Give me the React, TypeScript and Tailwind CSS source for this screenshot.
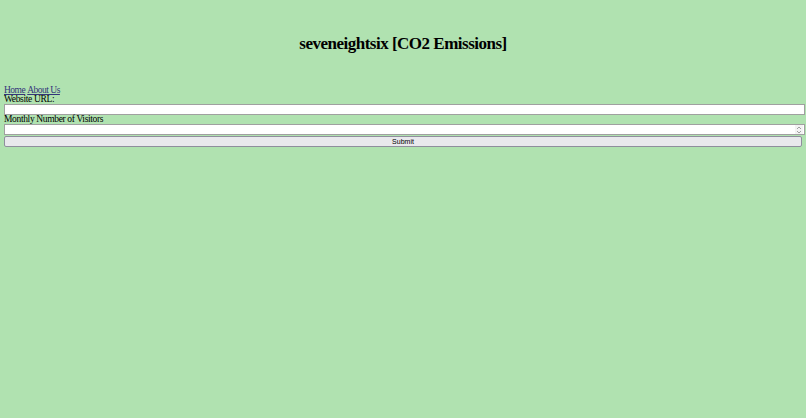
export default function App() {
  return (
    <div className="min-h-[418px] bg-[#b0e2b0] px-[4px] text-black" style={{ fontFamily: '"Liberation Serif", serif' }}>
      <h1 className="pt-[33px] text-center text-[17px] font-bold leading-[22px] tracking-[-0.5px]">
        seveneightsix [CO2 Emissions]
      </h1>
      <nav className="mt-[30px] flex gap-[2px] text-[9.5px] leading-[10px] tracking-[-0.5px]">
        <a href="#" className="text-[#34347a] underline">Home</a>
        <a href="#" className="text-[#34347a] underline">About Us</a>
      </nav>
      <form className="flex flex-col text-[9.5px] tracking-[-0.35px]">
        <label className="leading-[9px]">Website URL:</label>
        <input type="text" className="mr-[-3px] h-[11px] border border-[#a0a0a0] bg-white outline-none" />
        <label className="leading-[9px]">Monthly Number of Visitors</label>
        <div className="relative mr-[-3px] h-[11px] border border-[#a0a0a0] bg-white">
          <input type="text" className="h-full w-full bg-transparent outline-none" />
          <div className="absolute right-[1px] top-0 flex h-full w-[8px] items-center justify-center bg-[#f3f3f3]">
            <svg width="6" height="8" viewBox="0 0 6 8" fill="none" stroke="#8a8a8a" strokeWidth="0.8">
              <path d="M1 3 L3 1 L5 3" />
              <path d="M1 5 L3 7 L5 5" />
            </svg>
          </div>
        </div>
        <button
          type="button"
          className="mt-[1px] h-[11px] rounded-[2px] border border-[#8f8f9d] bg-[#e9e9ed] text-[7px] leading-[9px] tracking-normal text-black"
          style={{ fontFamily: '"Liberation Sans", Arial, sans-serif' }}
        >
          Submit
        </button>
      </form>
    </div>
  );
}
